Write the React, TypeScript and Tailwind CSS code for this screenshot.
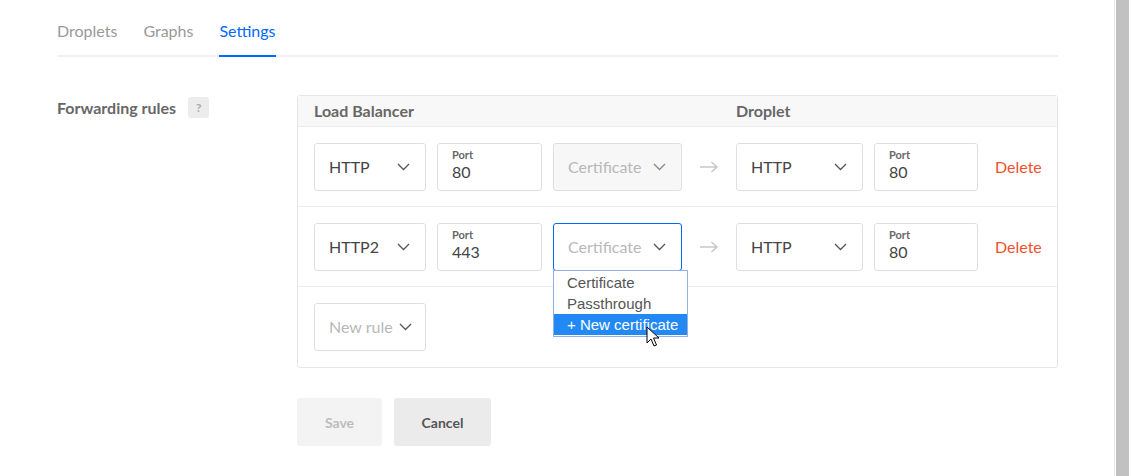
import type { ReactNode } from "react";

function Chevron({ color = "#555" }: { color?: string }) {
  return (
    <svg width="13" height="8" viewBox="0 0 13 8" fill="none">
      <path d="M1 1l5.5 5.5L12 1" stroke={color} strokeWidth="1.3" />
    </svg>
  );
}

function Select({
  label,
  width,
  muted,
  disabled,
  focused,
  children,
}: {
  label: string;
  width: string;
  muted?: boolean;
  disabled?: boolean;
  focused?: boolean;
  children?: ReactNode;
}) {
  return (
    <div className={`relative ${width} h-[48px] shrink-0`}>
      <div
        className={`flex h-full items-center justify-between rounded-[3px] border pl-[14px] pr-[15px] text-[16px] ${
          focused ? "border-[#0069ff]" : "border-[#dfdfdf]"
        } ${disabled ? "bg-[#f7f7f7]" : "bg-white"} ${
          muted ? "text-[#b8b8b8]" : "text-[#444]"
        }`}
      >
        <span>{label}</span>
        <Chevron color={disabled ? "#888" : "#555"} />
      </div>
      {children}
    </div>
  );
}

function Port({ value, width }: { value: string; width: string }) {
  return (
    <div
      className={`${width} h-[48px] shrink-0 rounded-[3px] border border-[#dfdfdf] bg-white pl-[14px] pt-[4px]`}
    >
      <div className="text-[11px] font-bold leading-[13px] text-[#676767]">Port</div>
      <div className="text-[16px] leading-[22px] text-[#444]">{value}</div>
    </div>
  );
}

function Arrow() {
  return (
    <div className="flex w-[54px] shrink-0 justify-center">
      <svg width="20" height="12" viewBox="0 0 20 12" fill="none">
        <path d="M1 6h17M12.5 1l5.5 5-5.5 5" stroke="#c8c8c8" strokeWidth="1.6" />
      </svg>
    </div>
  );
}

function CertMenu() {
  return (
    <div className="absolute left-0 top-[47px] z-10 w-[135px] border border-[#94b0dc] bg-white py-[1px] font-['Liberation_Sans',Arial,sans-serif] text-[15px] leading-[21px] text-[#555]">
      <div className="pl-[13px]">Certificate</div>
      <div className="pl-[13px]">Passthrough</div>
      <div className="bg-[#2289f4] pl-[13px] text-white">+ New certificate</div>
      <svg
        className="absolute left-[92px] top-[55px]"
        width="14"
        height="22"
        viewBox="0 0 14 22"
      >
        <path
          d="M1 1v16l4-4 3 7 2.5-1-3-7h5.5z"
          fill="#fff"
          stroke="#000"
          strokeWidth="1"
          strokeLinejoin="round"
        />
      </svg>
    </div>
  );
}

function Rule({
  proto,
  port,
  cert,
  target,
  targetPort,
}: {
  proto: string;
  port: string;
  cert: "disabled" | "open";
  target: string;
  targetPort: string;
}) {
  return (
    <div className="flex h-[80px] items-center border-b border-[#ececec] pl-[16px]">
      <Select label={proto} width="w-[112px]" />
      <div className="ml-[11px]">
        <Port value={port} width="w-[105px]" />
      </div>
      <div className="ml-[11px]">
        {cert === "disabled" ? (
          <Select label="Certificate" width="w-[129px]" muted disabled />
        ) : (
          <Select label="Certificate" width="w-[129px]" muted focused>
            <CertMenu />
          </Select>
        )}
      </div>
      <Arrow />
      <Select label={target} width="w-[127px]" />
      <div className="ml-[11px]">
        <Port value={targetPort} width="w-[104px]" />
      </div>
      <button className="ml-[17px] text-[16px] text-[#f0502d]">Delete</button>
    </div>
  );
}

export default function App() {
  return (
    <div className="flex h-[476px] overflow-hidden bg-white font-['Lato','Liberation_Sans',sans-serif]">
      <div className="flex-1 pl-[57px] pr-[56px]">
        {/* TABS */}
        <div className="flex h-[57px] gap-[26px] border-b-2 border-[#f0f0f0] text-[16px]">
          <div className="pt-[19px] text-[#999]">Droplets</div>
          <div className="pt-[19px] text-[#999]">Graphs</div>
          <div className="-mb-[2px] border-b-2 border-[#0069ff] pt-[19px] text-[#0069ff]">
            Settings
          </div>
        </div>

        {/* FORWARDING RULES */}
        <div className="mt-[38px] flex">
          <div className="flex w-[240px] shrink-0 items-start gap-[12px] pt-[2px]">
            <span className="text-[16px] font-bold leading-[22px] text-[#676767]">
              Forwarding rules
            </span>
            <span className="flex h-[21px] w-[21px] items-center justify-center rounded-[3px] bg-[#ececec] text-[12px] font-bold text-[#aaa]">
              ?
            </span>
          </div>

          <div className="flex-1">
            <div className="rounded-[3px] border border-[#e6e6e6]">
              <div className="flex h-[31px] items-center border-b border-[#ececec] bg-[#f8f8f8] pl-[16px] text-[16px] font-bold text-[#676767]">
                <div className="w-[422px]">Load Balancer</div>
                <div>Droplet</div>
              </div>
              <Rule proto="HTTP" port="80" cert="disabled" target="HTTP" targetPort="80" />
              <Rule proto="HTTP2" port="443" cert="open" target="HTTP" targetPort="80" />
              <div className="flex h-[80px] items-center pl-[16px]">
                <div className="flex h-[48px] w-[112px] items-center justify-between rounded-[3px] border border-[#dfdfdf] pl-[14px] pr-[13px] text-[16px] text-[#b8b8b8]">
                  <span>New rule</span>
                  <Chevron />
                </div>
              </div>
            </div>

            <div className="mt-[30px] flex gap-[12px]">
              <button className="h-[48px] w-[85px] rounded-[3px] bg-[#f3f3f3] text-[14px] font-bold text-[#bdbdbd]">
                Save
              </button>
              <button className="h-[48px] w-[97px] rounded-[3px] bg-[#ebebeb] text-[14px] font-bold text-[#555]">
                Cancel
              </button>
            </div>
          </div>
        </div>
      </div>

      {/* SCROLLBAR */}
      <div className="flex w-[17px] shrink-0 border-l border-[#e8e8e8] bg-white pl-[1px]">
        <div className="w-[13px] bg-[#c1c1c1]" />
      </div>
    </div>
  );
}
